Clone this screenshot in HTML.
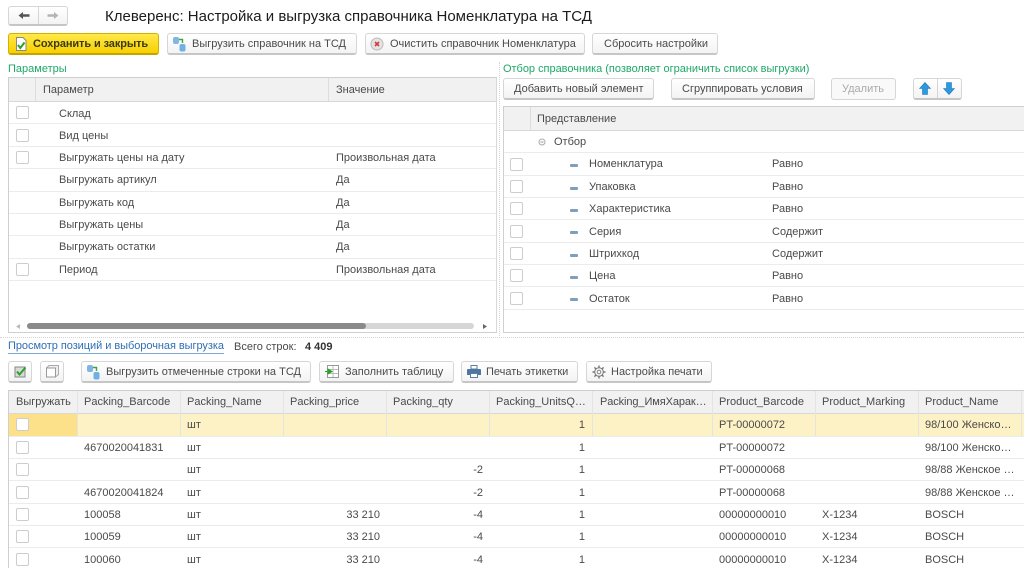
<!DOCTYPE html>
<html lang="ru"><head><meta charset="utf-8"><title>Клеверенс</title>
<style>
html,body{margin:0;padding:0;background:#fff}
#p{position:relative;width:1024px;height:568px;overflow:hidden;background:#fff;font:11px/14px "Liberation Sans",Arial,sans-serif;color:#4a4a4a;filter:blur(.35px)}
#p div,#p span,#p svg{position:absolute}
.t{white-space:nowrap}
.b{box-sizing:border-box;height:22px;border:1px solid #d6d6d6;border-bottom:2px solid #c6c6c6;border-radius:3px;background:linear-gradient(#fff,#f3f3f3);text-align:left;white-space:nowrap;line-height:19px;color:#555}
.c{box-sizing:border-box;width:13px;height:13px;border:1px solid #cdcdcd;border-radius:2px;background:#fff}
.l{height:1px;background:#ececec}
.v{width:1px;background:#dcdcdc}
.h{background:#f1f1f1}
.r{text-align:right;white-space:nowrap}
.g{color:#1fa868}
.d{width:8px;height:3px;background:#7f9fbd;border-radius:1px}
</style></head><body><div id="p">

<!-- nav -->
<div class="b" style="left:8px;top:6px;width:60px;height:20px"></div>
<div style="left:38px;top:7px;width:1px;height:17px;background:#d5d5d5"></div>
<svg style="left:18px;top:11px" width="12" height="9" viewBox="0 0 12 9"><path d="M.5 4.5L5 1V3.2H11.5V5.8H5V8Z" fill="#555"/></svg>
<svg style="left:47px;top:11px" width="12" height="9" viewBox="0 0 12 9"><path d="M11.5 4.5L7 1V3.2H.5V5.8H7V8Z" fill="#b4b4b4"/></svg>
<span class="t" style="left:105px;top:8px;font-size:15px;line-height:18px;color:#1c1c1c">Клеверенс: Настройка и выгрузка справочника Номенклатура на ТСД</span>

<!-- top buttons -->
<div class="b" style="left:8px;top:33px;width:151px;border:1px solid #d3b100;border-bottom:2px solid #c4a400;background:linear-gradient(#ffe94a,#f8d000)"></div>
<svg style="left:15px;top:37px" width="12" height="14" viewBox="0 0 12 14"><path d="M1.5.5H8L11 3.5V13.5H1.5Z" fill="#fff" stroke="#888"/><path d="M3 8L5.3 11 9.5 5.5" fill="none" stroke="#2aa12a" stroke-width="2"/></svg>
<span class="t" style="left:33px;top:37px;font-weight:bold;color:#3d3a10;letter-spacing:-.1px">Сохранить и закрыть</span>

<div class="b" style="left:167px;top:33px;width:190px"></div>
<svg style="left:172px;top:36px" width="14" height="16" viewBox="0 0 14 16"><rect x="1" y="1" width="6" height="7" rx="2" fill="#7fb6e6"/><rect x="7.5" y="8" width="6" height="7.5" rx="2" fill="#6fb0e6"/><path d="M7 3.5H10.5V7" fill="none" stroke="#38a838" stroke-width="1.4"/></svg>
<span class="t" style="left:192px;top:37px">Выгрузить справочник на ТСД</span>

<div class="b" style="left:365px;top:33px;width:220px"></div>
<svg style="left:370px;top:37px" width="14" height="14" viewBox="0 0 14 14"><circle cx="7" cy="7" r="6" fill="#e4e4e4" stroke="#bbb"/><path d="M5 5L9 9M9 5L5 9" stroke="#d8383c" stroke-width="1.6"/></svg>
<span class="t" style="left:390px;top:37px">Очистить справочник Номенклатура</span>

<div class="b" style="left:592px;top:33px;width:126px"></div>
<span class="t" style="left:604px;top:37px">Сбросить настройки</span>

<!-- left panel -->
<span class="t g" style="left:8px;top:62px">Параметры</span>
<div style="left:8px;top:77px;width:489px;height:256px;box-sizing:border-box;border:1px solid #cfcfcf;border-right-color:#d8d8d8"></div>
<div class="h" style="left:9px;top:78px;width:487px;height:23px;border-bottom:1px solid #d8d8d8"></div>
<div class="v" style="left:35px;top:78px;height:23px"></div>
<div class="v" style="left:328px;top:78px;height:23px"></div>
<span class="t" style="left:43px;top:83px">Параметр</span>
<span class="t" style="left:336px;top:83px">Значение</span>

<div class="l" style="left:9px;top:123px;width:487px"></div>
<div class="l" style="left:9px;top:146px;width:487px"></div>
<div class="l" style="left:9px;top:168px;width:487px"></div>
<div class="l" style="left:9px;top:191px;width:487px"></div>
<div class="l" style="left:9px;top:213px;width:487px"></div>
<div class="l" style="left:9px;top:235px;width:487px"></div>
<div class="l" style="left:9px;top:258px;width:487px"></div>
<div class="l" style="left:9px;top:280px;width:487px"></div>

<div class="c" style="left:16px;top:106px"></div>
<div class="c" style="left:16px;top:129px"></div>
<div class="c" style="left:16px;top:151px"></div>
<div class="c" style="left:16px;top:263px"></div>
<span class="t" style="left:59px;top:107px">Склад</span>
<span class="t" style="left:59px;top:129px">Вид цены</span>
<span class="t" style="left:59px;top:151px">Выгружать цены на дату</span>
<span class="t" style="left:59px;top:173px">Выгружать артикул</span>
<span class="t" style="left:59px;top:196px">Выгружать код</span>
<span class="t" style="left:59px;top:218px">Выгружать цены</span>
<span class="t" style="left:59px;top:240px">Выгружать остатки</span>
<span class="t" style="left:59px;top:263px">Период</span>
<span class="t" style="left:336px;top:151px">Произвольная дата</span>
<span class="t" style="left:336px;top:173px">Да</span>
<span class="t" style="left:336px;top:196px">Да</span>
<span class="t" style="left:336px;top:218px">Да</span>
<span class="t" style="left:336px;top:240px">Да</span>
<span class="t" style="left:336px;top:263px">Произвольная дата</span>

<div style="left:27px;top:323px;width:447px;height:6px;border-radius:3px;background:#d6d6d6"></div>
<div style="left:27px;top:323px;width:339px;height:6px;border-radius:3px;background:#8a8a8a"></div>
<svg style="left:16px;top:324px" width="4" height="5" viewBox="0 0 4 5"><path d="M4 0V5L0 2.5Z" fill="#bbb"/></svg>
<svg style="left:483px;top:324px" width="4" height="5" viewBox="0 0 4 5"><path d="M0 0V5L4 2.5Z" fill="#666"/></svg>

<!-- splitters -->
<div style="left:0;top:337px;width:1024px;border-top:1px dotted #d5d5d5"></div>
<div style="left:499px;top:62px;height:274px;border-left:1px dotted #d5d5d5"></div>

<!-- right panel -->
<span class="t g" style="left:503px;top:62px;letter-spacing:-.02px">Отбор справочника (позволяет ограничить список выгрузки)</span>
<div class="b" style="left:503px;top:78px;width:151px"></div>
<span class="t" style="left:514px;top:82px">Добавить новый элемент</span>
<div class="b" style="left:671px;top:78px;width:144px"></div>
<span class="t" style="left:682px;top:82px">Сгруппировать условия</span>
<div class="b" style="left:831px;top:78px;width:65px;border-bottom:1px solid #d5d5d5;background:#f9f9f9"></div>
<span class="t" style="left:842px;top:82px;color:#aaa">Удалить</span>
<div class="b" style="left:913px;top:78px;width:49px"></div>
<div style="left:937px;top:79px;width:1px;height:19px;background:#d5d5d5"></div>
<svg style="left:919px;top:82px" width="12" height="13" viewBox="0 0 12 13"><path d="M6 .5L11.5 6.5H8.5V12.5H3.5V6.5H.5Z" fill="#2f97dd" stroke="#1c7dbd" stroke-width=".6"/></svg>
<svg style="left:943px;top:82px" width="12" height="13" viewBox="0 0 12 13"><path d="M6 12.5L11.5 6.5H8.5V.5H3.5V6.5H.5Z" fill="#2f97dd" stroke="#1c7dbd" stroke-width=".6"/></svg>

<div style="left:503px;top:106px;width:530px;height:227px;box-sizing:border-box;border:1px solid #cfcfcf"></div>
<div class="h" style="left:504px;top:107px;width:520px;height:23px;border-bottom:1px solid #d8d8d8"></div>
<div class="v" style="left:530px;top:107px;height:23px"></div>
<span class="t" style="left:537px;top:112px">Представление</span>
<svg style="left:538px;top:138px" width="8" height="8" viewBox="0 0 8 8"><circle cx="4" cy="4" r="3" fill="none" stroke="#aaa"/><path d="M2.5 4H5.5" stroke="#999"/></svg>
<span class="t" style="left:554px;top:135px">Отбор</span>

<div class="l" style="left:504px;top:152px;width:520px"></div>
<div class="l" style="left:504px;top:175px;width:520px"></div>
<div class="l" style="left:504px;top:197px;width:520px"></div>
<div class="l" style="left:504px;top:219px;width:520px"></div>
<div class="l" style="left:504px;top:242px;width:520px"></div>
<div class="l" style="left:504px;top:264px;width:520px"></div>
<div class="l" style="left:504px;top:286px;width:520px"></div>
<div class="l" style="left:504px;top:309px;width:520px"></div>

<div class="c" style="left:510px;top:158px"></div>
<div class="c" style="left:510px;top:180px"></div>
<div class="c" style="left:510px;top:202px"></div>
<div class="c" style="left:510px;top:225px"></div>
<div class="c" style="left:510px;top:247px"></div>
<div class="c" style="left:510px;top:269px"></div>
<div class="c" style="left:510px;top:292px"></div>

<div class="d" style="left:570px;top:164px"></div>
<div class="d" style="left:570px;top:187px"></div>
<div class="d" style="left:570px;top:209px"></div>
<div class="d" style="left:570px;top:231px"></div>
<div class="d" style="left:570px;top:254px"></div>
<div class="d" style="left:570px;top:276px"></div>
<div class="d" style="left:570px;top:298px"></div>

<span class="t" style="left:589px;top:157px">Номенклатура</span>
<span class="t" style="left:589px;top:180px">Упаковка</span>
<span class="t" style="left:589px;top:202px">Характеристика</span>
<span class="t" style="left:589px;top:225px">Серия</span>
<span class="t" style="left:589px;top:247px">Штрихкод</span>
<span class="t" style="left:589px;top:269px">Цена</span>
<span class="t" style="left:589px;top:292px">Остаток</span>
<span class="t" style="left:772px;top:157px">Равно</span>
<span class="t" style="left:772px;top:180px">Равно</span>
<span class="t" style="left:772px;top:202px">Равно</span>
<span class="t" style="left:772px;top:225px">Содержит</span>
<span class="t" style="left:772px;top:247px">Содержит</span>
<span class="t" style="left:772px;top:269px">Равно</span>
<span class="t" style="left:772px;top:292px">Равно</span>

<!-- link row -->
<span class="t" style="left:8px;top:340px;color:#2f6fb5;border-bottom:1px solid #7fa8d4;line-height:13px;letter-spacing:-.05px">Просмотр позиций и выборочная выгрузка</span>
<span class="t" style="left:234px;top:340px">Всего строк:</span>
<span class="t" style="left:305px;top:340px;font-weight:bold;color:#333">4 409</span>

<!-- toolbar 2 -->
<div class="b" style="left:8px;top:361px;width:24px"></div>
<svg style="left:14px;top:365px" width="13" height="13" viewBox="0 0 13 13"><rect x="1" y="2" width="10" height="10" fill="#d9d9d9" stroke="#888"/><path d="M3 6.5L5.5 9.5 11.5 2.5" fill="none" stroke="#2aa12a" stroke-width="2"/></svg>
<div class="b" style="left:40px;top:361px;width:24px"></div>
<svg style="left:46px;top:365px" width="13" height="13" viewBox="0 0 13 13"><path d="M.5 3L3 .5H12.5V9.5L9.5 12" fill="#eee" stroke="#aaa"/><rect x=".5" y="3" width="9" height="9" fill="#fff" stroke="#999"/></svg>
<div class="b" style="left:81px;top:361px;width:230px"></div>
<svg style="left:86px;top:364px" width="14" height="16" viewBox="0 0 14 16"><rect x="1" y="1" width="6" height="7" rx="2" fill="#7fb6e6"/><rect x="7.5" y="8" width="6" height="7.5" rx="2" fill="#6fb0e6"/><path d="M7 3.5H10.5V7" fill="none" stroke="#38a838" stroke-width="1.4"/></svg>
<span class="t" style="left:106px;top:365px">Выгрузить отмеченные строки на ТСД</span>
<div class="b" style="left:319px;top:361px;width:135px"></div>
<svg style="left:325px;top:365px" width="14" height="13" viewBox="0 0 14 13"><rect x="2.5" y=".5" width="11" height="12" fill="#fff" stroke="#999"/><path d="M8 1V12M3 4.5H13M3 8.5H13" stroke="#bbb"/><path d="M0 6.5H3V4L7 6.5 3 9V6.5" fill="#2aa12a" stroke="#2aa12a"/></svg>
<span class="t" style="left:345px;top:365px">Заполнить таблицу</span>
<div class="b" style="left:461px;top:361px;width:117px"></div>
<svg style="left:467px;top:365px" width="14" height="13" viewBox="0 0 14 13"><path d="M4 .5H10V4H4Z" fill="#fff" stroke="#5b7fa3"/><path d="M1 4H13Q14 4 14 5V10H11V8H3V10H0V5Q0 4 1 4Z" fill="#4f76a0"/><path d="M3.5 8.5H10.5V12.5H3.5Z" fill="#fff" stroke="#5b7fa3"/></svg>
<span class="t" style="left:486px;top:365px">Печать этикетки</span>
<div class="b" style="left:586px;top:361px;width:126px"></div>
<svg style="left:592px;top:365px" width="14" height="14" viewBox="0 0 14 14"><circle cx="7" cy="7" r="4.3" fill="none" stroke="#777" stroke-width="1"/><circle cx="7" cy="7" r="1.8" fill="none" stroke="#777" stroke-width=".9"/><path d="M7 .5V2.7M7 11.3V13.5M.5 7H2.7M11.3 7H13.5M2.4 2.4L4 4M10 10L11.6 11.6M11.6 2.4L10 4M4 10L2.4 11.6" stroke="#777" stroke-width="1.4"/></svg>
<span class="t" style="left:611px;top:365px">Настройка печати</span>

<!-- bottom table -->
<div style="left:8px;top:390px;width:1030px;height:190px;box-sizing:border-box;border:1px solid #cfcfcf"></div>
<div class="h" style="left:9px;top:391px;width:1015px;height:22px;border-bottom:1px solid #d8d8d8"></div>
<div style="left:9px;top:414px;width:1015px;height:22px;background:#fdf1c6"></div>
<div style="left:9px;top:414px;width:68px;height:22px;background:#fde08a"></div>

<div class="v" style="left:77px;top:391px;height:45px;background:#e4e4e4"></div>
<div class="v" style="left:180px;top:391px;height:45px;background:#e4e4e4"></div>
<div class="v" style="left:283px;top:391px;height:45px;background:#e4e4e4"></div>
<div class="v" style="left:386px;top:391px;height:45px;background:#e4e4e4"></div>
<div class="v" style="left:489px;top:391px;height:45px;background:#e4e4e4"></div>
<div class="v" style="left:592px;top:391px;height:45px;background:#e4e4e4"></div>
<div class="v" style="left:712px;top:391px;height:45px;background:#e4e4e4"></div>
<div class="v" style="left:815px;top:391px;height:45px;background:#e4e4e4"></div>
<div class="v" style="left:918px;top:391px;height:45px;background:#e4e4e4"></div>
<div class="v" style="left:1021px;top:391px;height:45px;background:#e4e4e4"></div>

<span class="t" style="left:16px;top:395px">Выгружать</span>
<span class="t" style="left:84px;top:395px">Packing_Barcode</span>
<span class="t" style="left:187px;top:395px">Packing_Name</span>
<span class="t" style="left:290px;top:395px">Packing_price</span>
<span class="t" style="left:393px;top:395px">Packing_qty</span>
<span class="t" style="left:496px;top:395px">Packing_UnitsQ…</span>
<span class="t" style="left:600px;top:395px;letter-spacing:-.1px">Packing_ИмяХарак…</span>
<span class="t" style="left:719px;top:395px">Product_Barcode</span>
<span class="t" style="left:822px;top:395px">Product_Marking</span>
<span class="t" style="left:925px;top:395px">Product_Name</span>

<div class="l" style="left:9px;top:436px;width:1015px"></div>
<div class="l" style="left:9px;top:458px;width:1015px"></div>
<div class="l" style="left:9px;top:480px;width:1015px"></div>
<div class="l" style="left:9px;top:503px;width:1015px"></div>
<div class="l" style="left:9px;top:525px;width:1015px"></div>
<div class="l" style="left:9px;top:547px;width:1015px"></div>

<div class="c" style="left:16px;top:418px"></div>
<div class="c" style="left:16px;top:441px"></div>
<div class="c" style="left:16px;top:463px"></div>
<div class="c" style="left:16px;top:486px"></div>
<div class="c" style="left:16px;top:508px"></div>
<div class="c" style="left:16px;top:530px"></div>
<div class="c" style="left:16px;top:553px"></div>

<span class="t" style="left:84px;top:441px">4670020041831</span>
<span class="t" style="left:84px;top:486px">4670020041824</span>
<span class="t" style="left:84px;top:508px">100058</span>
<span class="t" style="left:84px;top:530px">100059</span>
<span class="t" style="left:84px;top:553px">100060</span>

<span class="t" style="left:187px;top:418px">шт</span>
<span class="t" style="left:187px;top:441px">шт</span>
<span class="t" style="left:187px;top:463px">шт</span>
<span class="t" style="left:187px;top:486px">шт</span>
<span class="t" style="left:187px;top:508px">шт</span>
<span class="t" style="left:187px;top:530px">шт</span>
<span class="t" style="left:187px;top:553px">шт</span>

<span class="r" style="right:644px;top:508px">33 210</span>
<span class="r" style="right:644px;top:530px">33 210</span>
<span class="r" style="right:644px;top:553px">33 210</span>

<span class="r" style="right:541px;top:463px">-2</span>
<span class="r" style="right:541px;top:486px">-2</span>
<span class="r" style="right:541px;top:508px">-4</span>
<span class="r" style="right:541px;top:530px">-4</span>
<span class="r" style="right:541px;top:553px">-4</span>

<span class="r" style="right:439px;top:418px">1</span>
<span class="r" style="right:439px;top:441px">1</span>
<span class="r" style="right:439px;top:463px">1</span>
<span class="r" style="right:439px;top:486px">1</span>
<span class="r" style="right:439px;top:508px">1</span>
<span class="r" style="right:439px;top:530px">1</span>
<span class="r" style="right:439px;top:553px">1</span>

<span class="t" style="left:719px;top:418px">PT-00000072</span>
<span class="t" style="left:719px;top:441px">PT-00000072</span>
<span class="t" style="left:719px;top:463px">PT-00000068</span>
<span class="t" style="left:719px;top:486px">PT-00000068</span>
<span class="t" style="left:719px;top:508px">00000000010</span>
<span class="t" style="left:719px;top:530px">00000000010</span>
<span class="t" style="left:719px;top:553px">00000000010</span>

<span class="t" style="left:822px;top:508px">X-1234</span>
<span class="t" style="left:822px;top:530px">X-1234</span>
<span class="t" style="left:822px;top:553px">X-1234</span>

<span class="t" style="left:925px;top:418px">98/100 Женско…</span>
<span class="t" style="left:925px;top:441px">98/100 Женско…</span>
<span class="t" style="left:925px;top:463px">98/88 Женское …</span>
<span class="t" style="left:925px;top:486px">98/88 Женское …</span>
<span class="t" style="left:925px;top:508px">BOSCH</span>
<span class="t" style="left:925px;top:530px">BOSCH</span>
<span class="t" style="left:925px;top:553px">BOSCH</span>

</div></body></html>
